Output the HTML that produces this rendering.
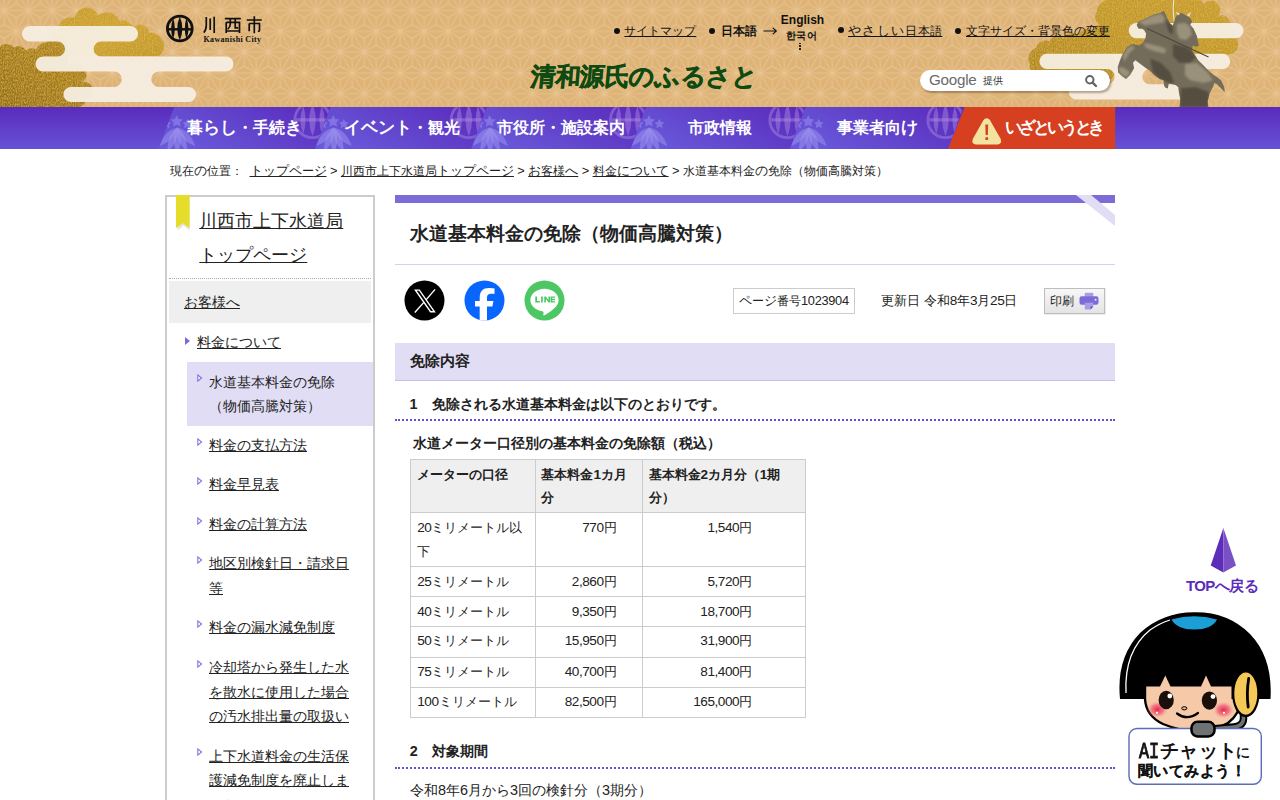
<!DOCTYPE html>
<html lang="ja">
<head>
<meta charset="utf-8">
<title>水道基本料金の免除（物価高騰対策）</title>
<style>
*{box-sizing:border-box;}
html,body{margin:0;padding:0;}
body{width:1280px;height:800px;overflow:hidden;background:#fff;font-family:"Liberation Sans",sans-serif;color:#222;position:relative;}
a{color:#222;text-decoration:underline;text-underline-offset:auto;}
i{font-style:normal;line-height:0;}
.s11{font-size:11px}.s12{font-size:12px}.s13{font-size:13px}.s14{font-size:14px}.s15{font-size:15px}.s16{font-size:16px}.s17{font-size:17px}.s18{font-size:18px}.s19{font-size:19px}
.abs{position:absolute;white-space:nowrap;}
/* header */
#hd{position:absolute;left:0;top:0;width:1280px;height:107px;background:#deb377;overflow:hidden;}
#hdsvg{position:absolute;left:0;top:0;}
.hl{position:absolute;font-size:12px;line-height:16px;white-space:nowrap;color:#111;}
.dot{position:absolute;width:6px;height:6px;border-radius:3px;background:#111;}
/* nav */
#nav{position:absolute;left:0;top:107px;width:1280px;height:42px;background:#5a2bbd;overflow:hidden;}
.nv{position:absolute;top:0;height:42px;line-height:42px;color:#fff;font-weight:bold;font-size:16.8px;white-space:nowrap;}
/* breadcrumb */
#bc{position:absolute;left:170px;top:162px;font-size:12.8px;line-height:18px;white-space:nowrap;color:#222;}
/* side */
#side{position:absolute;left:165px;top:195px;width:210px;height:620px;border:2px solid #ccc;background:#fff;}
.sl{position:absolute;left:44px;width:150px;font-size:14px;line-height:24.48px;color:#222;}
.tri{position:absolute;width:0;height:0;}
/* main */
#main{position:absolute;left:395px;top:195px;width:720px;height:605px;}
.cell{position:absolute;font-size:13.6px;line-height:23.12px;white-space:nowrap;color:#222;}
.num{text-align:right;}
</style>
</head>
<body>
<div id="hd">
<svg id="hdsvg" width="1280" height="107" viewBox="0 0 1280 107">
<defs>
<pattern id="asa" x="4.2" y="10.6" width="24" height="41.57" patternUnits="userSpaceOnUse">
<g stroke="#e8c594" stroke-width="1.1" stroke-opacity=".8" fill="none" stroke-linecap="round">
<path d="M0 0H24M-12 20.785H36M0 41.57H24"/>
<path d="M0 0L12 20.785L24 0M0 41.57L12 20.785L24 41.57"/>
<path d="M12 6.93L0 0M12 6.93L24 0M12 6.93V20.785"/>
<path d="M0 13.86V0M0 13.86L12 20.785M24 13.86V0M24 13.86L12 20.785"/>
<path d="M12 34.64V20.785M12 34.64L0 41.57M12 34.64L24 41.57"/>
<path d="M0 27.71V41.57M0 27.71L12 20.785M24 27.71V41.57M24 27.71L12 20.785"/>
</g>
</pattern>
<linearGradient id="gold" x1="0" y1="0" x2="1" y2="1">
<stop offset="0" stop-color="#c59a2e"/><stop offset=".5" stop-color="#cda233"/><stop offset="1" stop-color="#bf942a"/>
</linearGradient>
<linearGradient id="gold2" x1="1" y1="0" x2="0" y2="1">
<stop offset="0" stop-color="#b18624"/><stop offset=".6" stop-color="#a1761c"/><stop offset="1" stop-color="#916a18"/>
</linearGradient>
<linearGradient id="gold3" x1="0" y1="1" x2="1" y2="0">
<stop offset="0" stop-color="#ad8222"/><stop offset=".5" stop-color="#bf942a"/><stop offset="1" stop-color="#c89c30"/>
</linearGradient>
<filter id="gtex" x="0" y="0" width="100%" height="100%">
<feTurbulence type="fractalNoise" baseFrequency="0.9 0.5" numOctaves="2" seed="3" result="n"/>
<feColorMatrix in="n" type="matrix" values="0 0 0 0 0  0 0 0 0 0  0 0 0 0 0  .9 .9 0 0 -0.7" result="a"/>
<feFlood flood-color="#e2c055" result="c"/>
<feComposite in="c" in2="a" operator="in" result="sp"/>
<feComposite in="sp" in2="SourceGraphic" operator="in" result="sp2"/>
<feMerge><feMergeNode in="SourceGraphic"/><feMergeNode in="sp2"/></feMerge>
</filter>
<filter id="sbl" x="-10%" y="-10%" width="120%" height="120%"><feGaussianBlur stdDeviation="1.300"/></filter>
</defs>
<rect width="1280" height="107" fill="#deb377"/>
<rect width="1280" height="107" fill="url(#asa)"/>
<!-- left gold clouds -->
<g fill="url(#gold)" filter="url(#gtex)">
<path d="M52 56V34Q56 27 59 27Q60 20 66 18.500Q70 17 75 17.500A12 12 0 0 1 98 15.500A14 14 0 0 1 120 22A5 5 0 0 1 128 22.500L134.500 26.500A9 9 0 0 1 149 33A13 13 0 0 1 159 56z"/>
</g>
<g fill="url(#gold2)" filter="url(#gtex)">
<path d="M0 46.500a10 10 0 0 1 14 1a9 9 0 0 1 12 3a9 9 0 0 1 10-1a12 12 0 0 1 10-7a12 12 0 0 1 8-4l14 0V66a10 10 0 0 1 16 3a8 8 0 0 1-2 13a9 9 0 0 1 11 8a9 9 0 0 1-7 10a9 9 0 0 1-7 7H0z"/>
</g>
<!-- left white cloud -->
<g fill="#f5eee1" fill-opacity=".95">
<path d="M29.800 26H130.200a7.800 7.800 0 0 1 0 15.600H101a7.400 7.400 0 0 0 0 14.900H226a7.500 7.500 0 0 1 0 15H159a7.700 7.700 0 0 0 0 15.500H188.500a7.500 7.500 0 0 1 0 15H70.900a7.500 7.500 0 0 1 0-15H114a7.700 7.700 0 0 0 0-15.500H43a7.500 7.500 0 0 1 0-15H57.500a7.400 7.400 0 0 0 0-14.900H29.800a7.800 7.800 0 0 1 0-15.600z"/>
</g>
<!-- right gold cloud -->
<g fill="url(#gold3)" filter="url(#gtex)">
<path d="M1110 0A12 12 0 0 0 1097 12A8 8 0 0 0 1101 25A6 6 0 0 0 1094 33A9 9 0 0 0 1078 36A8 8 0 0 0 1064 38.500A8 8 0 0 0 1050 41.500A10 10 0 0 0 1036 48A11 11 0 0 0 1030 64A8 8 0 0 0 1036 74L1040 78H1106Q1114 82 1114 72V54H1225A10 10 0 0 0 1237 40A8 8 0 0 0 1229 29A9 9 0 0 0 1218 16A9 9 0 0 0 1204 4A8 8 0 0 0 1195 0z"/>
</g>
<!-- right white clouds -->
<g fill="#f5eee1" fill-opacity=".95">
<rect x="1128.700" y="23" width="114.700" height="15.200" rx="7.600"/>
<path d="M1047 53.800H1222.600a7.600 7.600 0 0 1 0 15.200H1150a7.650 7.650 0 0 0 0 15.300H1190a7.600 7.600 0 0 1 0 15.200H1076.400a7.600 7.600 0 0 1 0-15.200H1107a7.650 7.650 0 0 0 0-15.300H1047a7.600 7.600 0 0 1 0-15.200z"/>
</g>
<!-- statue -->
<g id="statue">
<clipPath id="stc"><path d="M1136.7 24.7 L1138.7 21.4 L1144.8 18.7 L1152.8 14.7 L1160.8 12.7 L1163.5 10.7 L1165.5 14.0 L1167.5 18.7 L1170.2 23.4 L1172.8 25.4 L1174.2 21.4 L1175.5 17.4 L1178.2 14.0 L1180.9 12.7 L1184.9 14.7 L1190.2 18.0 L1192.2 21.4 L1190.2 24.7 L1193.6 28.7 L1196.9 36.1 L1198.9 46.1 L1195.6 46.8 L1192.9 45.5 L1191.8 50.1 L1195.6 56.1 L1198.2 60.2 L1203.6 65.5 L1208.9 70.9 L1213.6 74.9 L1217.0 76.9 L1221.0 80.2 L1224.3 86.9 L1224.7 92.2 L1221.0 88.2 L1217.0 84.2 L1214.3 82.9 L1212.9 86.9 L1209.6 93.6 L1207.6 101.6 L1208.3 107.5 L1179.5 107.5 L1180.2 98.9 L1178.9 92.2 L1178.2 86.9 L1175.5 84.9 L1168.8 83.6 L1167.8 88.5 L1165.1 87.6 L1164.1 85.6 L1163.5 80.2 L1159.5 78.9 L1154.1 74.9 L1150.1 70.9 L1146.1 68.2 L1140.7 64.2 L1135.4 60.2 L1133.0 62.8 L1134.1 68.2 L1130.1 74.9 L1126.0 78.9 L1122.0 76.2 L1118.0 72.2 L1117.8 66.8 L1120.0 60.2 L1122.3 54.8 L1127.4 46.8 L1132.7 44.1 L1139.4 45.5 L1142.8 42.8 L1145.4 38.8 L1146.1 33.4 L1144.1 30.1 L1142.1 28.7 L1138.7 28.7 L1137.4 26.7z"/></clipPath>
<path fill="none" stroke="#efeadc" stroke-width="1" d="M1173.700 0Q1171.300 20 1179.500 38"/>
<path fill="#746c5a" d="M1136.7 24.7 L1138.7 21.4 L1144.8 18.7 L1152.8 14.7 L1160.8 12.7 L1163.5 10.7 L1165.5 14.0 L1167.5 18.7 L1170.2 23.4 L1172.8 25.4 L1174.2 21.4 L1175.5 17.4 L1178.2 14.0 L1180.9 12.7 L1184.9 14.7 L1190.2 18.0 L1192.2 21.4 L1190.2 24.7 L1193.6 28.7 L1196.9 36.1 L1198.9 46.1 L1195.6 46.8 L1192.9 45.5 L1191.8 50.1 L1195.6 56.1 L1198.2 60.2 L1203.6 65.5 L1208.9 70.9 L1213.6 74.9 L1217.0 76.9 L1221.0 80.2 L1224.3 86.9 L1224.7 92.2 L1221.0 88.2 L1217.0 84.2 L1214.3 82.9 L1212.9 86.9 L1209.6 93.6 L1207.6 101.6 L1208.3 107.5 L1179.5 107.5 L1180.2 98.9 L1178.9 92.2 L1178.2 86.9 L1175.5 84.9 L1168.8 83.6 L1167.8 88.5 L1165.1 87.6 L1164.1 85.6 L1163.5 80.2 L1159.5 78.9 L1154.1 74.9 L1150.1 70.9 L1146.1 68.2 L1140.7 64.2 L1135.4 60.2 L1133.0 62.8 L1134.1 68.2 L1130.1 74.9 L1126.0 78.9 L1122.0 76.2 L1118.0 72.2 L1117.8 66.8 L1120.0 60.2 L1122.3 54.8 L1127.4 46.8 L1132.7 44.1 L1139.4 45.5 L1142.8 42.8 L1145.4 38.8 L1146.1 33.4 L1144.1 30.1 L1142.1 28.7 L1138.7 28.7 L1137.4 26.7z"/>
<g clip-path="url(#stc)" filter="url(#sbl)"><path fill="#9a917a" d="M1138.7 22.1 L1152.8 15.4 L1160.8 13.4 L1164.8 17.4 L1163.5 22.7 L1154.1 24.1 L1144.8 25.4z M1143.4 42.8 L1150.1 44.1 L1160.8 46.8 L1166.1 49.5 L1164.8 53.5 L1155.5 51.5 L1146.1 48.1z M1176.8 24.1 L1184.9 22.7 L1190.2 26.7 L1191.6 34.8 L1186.2 40.1 L1179.5 38.8 L1176.8 32.1z M1184.9 64.2 L1196.9 62.8 L1207.6 72.2 L1212.9 80.2 L1203.6 82.9 L1190.2 80.2 L1184.9 74.9z M1122.7 56.1 L1127.4 48.1 L1132.7 45.5 L1134.7 48.1 L1128.7 53.5 L1124.7 61.5z M1119.4 66.8 L1124.7 68.2 L1130.1 72.2 L1126.7 77.5 L1122.0 74.9 L1118.7 70.9z"/>
<path fill="#544d40" d="M1150.1 58.8 L1160.8 62.8 L1170.2 72.2 L1174.2 82.9 L1168.8 82.9 L1159.5 78.2 L1152.8 72.2z M1172.8 44.1 L1184.9 46.8 L1191.6 50.8 L1195.6 57.5 L1190.2 62.8 L1179.5 62.8 L1172.8 56.1z M1180.9 88.2 L1195.6 86.9 L1208.9 92.2 L1207.6 107.0 L1180.2 107.0z M1166.1 20.1 L1170.2 24.1 L1172.8 26.7 L1172.8 34.8 L1168.8 32.1 L1166.8 25.4z"/></g>
<path fill="none" stroke="#4e473b" stroke-width="1.300" d="M1147 28.500L1208.500 57"/>
<path fill="#e4dece" d="M1186.500 15l4.500-3-1.500 4.500zM1178.500 15.500l-3-3.500 4.500 1.500z"/>
</g>
<!-- emblem -->
<g transform="translate(179.800 28.500)">
<circle r="12.400" fill="none" stroke="#111" stroke-width="2.800"/>
<path d="M-12.500 .8H12.500" stroke="#111" stroke-width="2.400"/>
<path d="M0-12Q-5 0 0 12Q5 0 0-12z" fill="#111"/>
<path d="M-6.600-10.500Q-10.800 0-6.600 10.500Q-3.400 0-6.600-10.500z" fill="#111"/>
<path d="M6.600-10.500Q10.800 0 6.600 10.500Q3.400 0 6.600-10.500z" fill="#111"/>
</g>
<!-- kawanishi-shi -->
<g fill="none" stroke="#111" stroke-width="1.700" stroke-linecap="butt">
<path d="M206.300 17V25.500Q206.100 30.300 203.800 32.600M210.200 18.400V30M214.200 16.800V33"/>
<path d="M224.800 18.600H240.800M230.300 18.600V24Q230.100 27.600 227.600 29.200M235.200 18.600V27.800H238.200M226.200 22.300H239.500V33M226.200 22.300V33M226.200 31H239.500"/>
<path d="M254.300 16.200V19.600M246.800 20H261.800M249.200 23.500H259.500V30.200Q259.500 31.500 257.800 31.500M249.200 23.500V31.200M254.300 20V33.200"/>
</g>
</svg>
<div class="abs" style="left:203.500px;top:34.500px;font-family:'Liberation Serif',serif;font-weight:bold;font-size:8px;line-height:10px;letter-spacing:.34px;color:#111;">Kawanishi City</div>
<span class="dot" style="left:614px;top:27.500px"></span>
<a class="hl" style="left:624.400px;top:23px">サイトマップ</a>
<span class="dot" style="left:708.700px;top:27.500px"></span>
<span class="hl" style="left:720.900px;top:23px;font-weight:bold">日本語</span>
<svg class="abs" style="left:763px;top:26px" width="15" height="10" viewBox="0 0 15 10"><path d="M.5 5H13.200M9.800 1.800L13.400 5L9.800 8.200" fill="none" stroke="#111" stroke-width="1.050"/></svg>
<span class="hl" style="left:780.800px;top:12px;font-weight:bold;font-size:12px;">English</span>
<span class="hl" style="left:785.900px;top:27.500px;font-weight:bold;font-size:10px;line-height:16px;letter-spacing:.4px">한국어</span>
<span class="hl" style="left:798.500px;top:41px;width:3px;height:9px;"><i style="position:absolute;left:.5px;top:1.600px;width:1.500px;height:1.500px;background:#222"></i><i style="position:absolute;left:.5px;top:4.300px;width:1.500px;height:1.500px;background:#222"></i><i style="position:absolute;left:.5px;top:7px;width:1.500px;height:1.500px;background:#222"></i></span>
<span class="dot" style="left:837.700px;top:27px"></span>
<a class="hl" style="left:848px;top:22.500px"><i class="s13" style="letter-spacing:1.300px">やさしい</i><i style="letter-spacing:.4px">日本語</i></a>
<span class="dot" style="left:955px;top:27.500px"></span>
<a class="hl" style="left:966px;top:23px">文字サイズ・背景色の変更</a>
<div class="abs" id="catch" style="left:531px;top:60px;font-weight:bold;font-size:25px;line-height:32px;color:#0f4a12;letter-spacing:-.45px;-webkit-text-stroke:.5px #0f4a12;transform:skewX(-5deg);">清和源氏のふるさと</div>
<div class="abs" style="left:920px;top:69.800px;width:189.500px;height:20.800px;border-radius:10.400px;background:#fff;box-shadow:1.500px 2px 2px rgba(80,55,20,.4);"></div>
<div class="abs" style="left:929px;top:70.500px;font-size:15.200px;line-height:18px;color:#6b6b6b;letter-spacing:-.25px;">Google</div>
<div class="abs" style="left:983px;top:73.800px;font-size:10px;line-height:14px;color:#333;">提供</div>
<svg class="abs" style="left:1084px;top:73.500px" width="14" height="14" viewBox="0 0 14 14"><circle cx="5.800" cy="5.800" r="3.700" fill="none" stroke="#646464" stroke-width="2"/><path d="M8.600 8.600L12 12" stroke="#646464" stroke-width="2.400" stroke-linecap="round"/></svg>
</div>
<div id="nav">
<svg class="abs" style="left:0;top:0" width="1280" height="42" viewBox="0 107 1280 42">
<defs><linearGradient id="nbg" x1="0" y1="0" x2="0" y2="1"><stop offset="0" stop-color="#5a2bbd"/><stop offset="1" stop-color="#6652d4"/></linearGradient>
<linearGradient id="nit" x1="0" y1=".75" x2="1" y2=".25"><stop offset="0" stop-color="#6a5adb"/><stop offset=".4" stop-color="#6349cf"/><stop offset="1" stop-color="#5b2cbe"/></linearGradient>
<g id="leaf" fill="#a398f0" fill-opacity=".48">
<path transform="rotate(-44)" d="M0 0Q7 11 0 26Q-7 11 0 0z"/>
<path transform="rotate(-22)" d="M0 0Q7 11 0 26Q-7 11 0 0z"/>
<path transform="rotate(0)" d="M0 0Q7 11 0 26Q-7 11 0 0z"/>
<path transform="rotate(22)" d="M0 0Q7 11 0 26Q-7 11 0 0z"/>
<path transform="rotate(44)" d="M0 0Q7 11 0 26Q-7 11 0 0z"/>
<path d="M-0.5 -12.5L1.4 -8.6L5.7 -8.0L2.6 -5.0L3.3 -0.7L-0.5 -2.8L-4.3 -0.7L-3.6 -5.0L-6.7 -8.0L-2.4 -8.6z"/>
<path d="M10.0 -8.8L11.6 -5.6L15.0 -5.1L12.5 -2.7L13.1 0.8L10.0 -0.9L6.9 0.8L7.5 -2.7L5.0 -5.1L8.4 -5.6z"/>
<path d="M-11.0 -8.8L-9.4 -5.6L-6.0 -5.1L-8.5 -2.7L-7.9 0.8L-11.0 -0.9L-14.1 0.8L-13.5 -2.7L-16.0 -5.1L-12.6 -5.6z"/>
</g>
<g id="ring" fill="#b08fe0" fill-opacity=".45" stroke="none"><path d="M0-19.100A19.100 19.100 0 1 0 0 19.100A19.100 19.100 0 1 0 0-19.100zM0-16.300A16.300 16.300 0 1 1 0 16.300A16.300 16.300 0 1 1 0-16.300z" fill-rule="evenodd"/><path d="M-16.300-1.800H16.300V1.400H-16.300z"/><path d="M0-16.300Q-6.600 0 0 16.300Q6.600 0 0-16.300z"/><path d="M-9.200-14Q-15 0-9.200 14Q-4.600 0-9.200-14z"/><path d="M9.200-14Q15 0 9.200 14Q4.600 0 9.200-14z"/></g>
</defs>
<rect x="0" y="107" width="1280" height="42" fill="url(#nbg)"/>
<path d="M158.6 149L174.2 107H330.6L315.0 149z" fill="url(#nit)"/>
<clipPath id="cp0"><path d="M158.6 149L174.2 107H330.6L315.0 149z"/></clipPath>
<g clip-path="url(#cp0)"><use href="#ring" x="312.5" y="120"/><use href="#leaf" x="177.3" y="127.500"/></g>
<path d="M315.0 149L330.6 107H486.9L471.3 149z" fill="url(#nit)"/>
<clipPath id="cp1"><path d="M315.0 149L330.6 107H486.9L471.3 149z"/></clipPath>
<g clip-path="url(#cp1)"><use href="#ring" x="468.8" y="120"/><use href="#leaf" x="333.8" y="127.500"/></g>
<path d="M471.3 149L486.9 107H646.2L630.6 149z" fill="url(#nit)"/>
<clipPath id="cp2"><path d="M471.3 149L486.9 107H646.2L630.6 149z"/></clipPath>
<g clip-path="url(#cp2)"><use href="#ring" x="628.1" y="120"/><use href="#leaf" x="490.1" y="127.500"/></g>
<path d="M630.6 149L646.2 107H805.6L790.0 149z" fill="url(#nit)"/>
<clipPath id="cp3"><path d="M630.6 149L646.2 107H805.6L790.0 149z"/></clipPath>
<g clip-path="url(#cp3)"><use href="#ring" x="787.5" y="120"/><use href="#leaf" x="649.4" y="127.500"/></g>
<path d="M790.0 149L805.6 107H963.6L948.0 149z" fill="url(#nit)"/>
<clipPath id="cp4"><path d="M790.0 149L805.6 107H963.6L948.0 149z"/></clipPath>
<g clip-path="url(#cp4)"><use href="#ring" x="945.5" y="120"/><use href="#leaf" x="808.8" y="127.500"/></g>
<path d="M948 149L964.700 107H1115.200V149z" fill="#d63f1f"/>
<path d="M986.700 118.300Q984.500 118.300 983.400 120.200L972.900 138.800Q971 143.900 975.700 144.400H997.800Q1002.500 143.900 1000.600 138.800L990 120.200Q988.900 118.300 986.700 118.300z" fill="#f2e4a0"/>
<path d="M985.300 124.500h2.900l-.35 10.500h-2.200z M985.400 137.200h2.700v2.700h-2.700z" fill="#d63f1f"/>
</svg>
<span class="nv" style="left:186.5px"><i class="s16">暮</i><i class="s17">らし</i><i class="s16">・手続</i><i class="s17">き</i></span>
<span class="nv" style="left:343.5px"><i class="s17">イベント</i><i class="s16">・観光</i></span>
<span class="nv" style="left:497.1px"><i class="s16">市役所・施設案内</i></span>
<span class="nv" style="left:688.3px"><i class="s16">市政情報</i></span>
<span class="nv" style="left:836.8px"><i class="s16">事業者向</i><i class="s17">け</i></span>
<span class="nv" style="left:1005px;letter-spacing:-3.100px"><i class="s17">いざというとき</i></span>
</div>
<div id="bc" style="word-spacing:-.12px"><i class="s12">現在</i><i class="s13">の</i><i class="s12">位置：</i> <a style="margin-left:3.100px"><i class="s13">トップペ</i><i class="s12">ー</i><i class="s13">ジ</i></a> &gt; <a><i class="s12">川西市上下水道局</i><i class="s13">トップペ</i><i class="s12">ー</i><i class="s13">ジ</i></a> &gt; <a><i class="s13">お</i><i class="s12">客様</i><i class="s13">へ</i></a> &gt; <a><i class="s12">料金</i><i class="s13">について</i></a> &gt; <i class="s12">水道基本料金</i><i class="s13">の</i><i class="s12">免除（物価高騰対策）</i></div>
<div id="side">
<svg class="abs" style="left:8px;top:-2px" width="18" height="38" viewBox="0 0 18 38"><path d="M2.500 1.500V35.500L8.500 30.500L14.500 35.500V1.500z" fill="#b9b08a" fill-opacity=".35"/><path d="M1 0H14.600V33L7.800 28L1 33z" fill="#e6dc2a"/></svg>
<div class="abs" style="left:32.300px;top:8.200px;font-size:18px;line-height:33.600px;white-space:normal;width:170px"><a>川西市上下水道局<br>トップページ</a></div>
<div class="abs" style="left:2px;top:80.700px;width:202px;height:0;border-top:1px dotted #aaa"></div>
<div class="abs" style="left:2px;top:84px;width:202px;height:41.600px;background:#efefef"></div>
<div class="sl" style="left:17px;top:93.4px;"><a>お客様へ</a></div>
<div class="tri" style="left:18px;top:139.500px;border-left:5px solid #7b6cd8;border-top:4px solid transparent;border-bottom:4px solid transparent"></div>
<div class="sl" style="left:30px;top:132.700px;"><a>料金について</a></div>
<div class="abs" style="left:20px;top:165px;width:186px;height:63.600px;background:#e1ddf5"></div>
<svg class="abs" style="left:29.500px;top:177.3px" width="6" height="8" viewBox="0 0 6 8"><path d="M.8 .9L4.600 4L.8 7.100z" fill="#fff" fill-opacity=".6" stroke="#7d6fe0" stroke-width="1.050"/></svg>
<div class="sl" style="left:42px;top:172.8px;">水道基本料金の免除<br>（物価高騰対策）</div>
<svg class="abs" style="left:29.500px;top:240.9px" width="6" height="8" viewBox="0 0 6 8"><path d="M.8 .9L4.600 4L.8 7.100z" fill="#fff" fill-opacity=".6" stroke="#7d6fe0" stroke-width="1.050"/></svg>
<div class="sl" style="left:42px;top:236.4px;"><a>料金の支払方法</a></div>
<svg class="abs" style="left:29.500px;top:279.9px" width="6" height="8" viewBox="0 0 6 8"><path d="M.8 .9L4.600 4L.8 7.100z" fill="#fff" fill-opacity=".6" stroke="#7d6fe0" stroke-width="1.050"/></svg>
<div class="sl" style="left:42px;top:275.4px;"><a>料金早見表</a></div>
<svg class="abs" style="left:29.500px;top:319.5px" width="6" height="8" viewBox="0 0 6 8"><path d="M.8 .9L4.600 4L.8 7.100z" fill="#fff" fill-opacity=".6" stroke="#7d6fe0" stroke-width="1.050"/></svg>
<div class="sl" style="left:42px;top:315px;"><a>料金の計算方法</a></div>
<svg class="abs" style="left:29.500px;top:358.9px" width="6" height="8" viewBox="0 0 6 8"><path d="M.8 .9L4.600 4L.8 7.100z" fill="#fff" fill-opacity=".6" stroke="#7d6fe0" stroke-width="1.050"/></svg>
<div class="sl" style="left:42px;top:354.4px;"><a>地区別検針日・請求日<br>等</a></div>
<svg class="abs" style="left:29.500px;top:422.8px" width="6" height="8" viewBox="0 0 6 8"><path d="M.8 .9L4.600 4L.8 7.100z" fill="#fff" fill-opacity=".6" stroke="#7d6fe0" stroke-width="1.050"/></svg>
<div class="sl" style="left:42px;top:418.3px;"><a>料金の漏水減免制度</a></div>
<svg class="abs" style="left:29.500px;top:462.8px" width="6" height="8" viewBox="0 0 6 8"><path d="M.8 .9L4.600 4L.8 7.100z" fill="#fff" fill-opacity=".6" stroke="#7d6fe0" stroke-width="1.050"/></svg>
<div class="sl" style="left:42px;top:458.3px;"><a>冷却塔から発生した水<br>を散水に使用した場合<br>の汚水排出量の取扱い</a></div>
<svg class="abs" style="left:29.500px;top:551.2px" width="6" height="8" viewBox="0 0 6 8"><path d="M.8 .9L4.600 4L.8 7.100z" fill="#fff" fill-opacity=".6" stroke="#7d6fe0" stroke-width="1.050"/></svg>
<div class="sl" style="left:42px;top:546.7px;"><a>上下水道料金の生活保<br>護減免制度を廃止しま<br>した</a></div>
</div>
<div id="main">
<div class="abs" style="left:0;top:0;width:720px;height:8px;background:#7b6cd8"></div>
<svg class="abs" style="left:676px;top:0" width="44" height="34" viewBox="676 0 44 34"><path d="M681 0H696L720 20V31z" fill="#e1ddf5"/></svg>
<div class="abs" style="left:15px;top:25px;font-size:19.200px;font-weight:bold;line-height:28px;color:#222;"><i class="s19">水道基本料金の免除（物価高騰対策）</i></div>
<div class="abs" style="left:0px;top:69px;width:720px;height:1px;background:#d5d0f0;"></div>
<svg class="abs" style="left:9.400px;top:84.900px" width="161" height="41" viewBox="404.500 279.500 161 41">
<circle cx="425" cy="300" r="20" fill="#000"/>
<path d="M414.600 288.900H420.200L436.300 312H430.700z M417.300 290.300L431.400 310.600H433.600L419.500 290.300z" fill="#fff" fill-rule="evenodd"/>
<path d="M435.600 288.900L426.500 299.400M424.300 301.900L415.300 312" stroke="#fff" stroke-width="1.400" fill="none"/>
<circle cx="485" cy="300" r="20" fill="#0866ff"/>
<path d="M480.200 320V306H475.500V300.500H480.200V297.300C480.200 290.700 483.400 287.500 489.700 287.500C491.300 287.500 493.600 287.750 495 288.100V293.400C494.300 293.300 493.300 293.250 492.300 293.250C488.900 293.250 487.500 294.500 487.500 297.600V300.500H493.900L492.900 306H487.500V320z" fill="#fff"/>
<circle cx="545" cy="300" r="20" fill="#4cc764"/>
<path d="M545 288.300c-7.800 0-14.100 5-14.100 11.300c0 5.600 5 10.300 11.800 11.200c.45.100 1.100.3 1.250.7c.15.35.1.9.05 1.300l-.2 1.150c-.05.350-.3 1.400 1.250.750c1.500-.6 8.100-4.700 11.050-8.100c2.050-2.200 3-4.500 3-7c0-6.300-6.300-11.300-14.100-11.300z" fill="#fff"/>
<g fill="#4cc764"><path d="M535.800 295.900h1.700v4.700h2.900v1.500h-4.600z"/><path d="M541.600 295.900h1.700v6.200h-1.700z"/><path d="M544.800 295.900h1.600l2.600 3.600v-3.600h1.650v6.200h-1.550l-2.650-3.650v3.650h-1.650z"/><path d="M552 295.900h4.500v1.450h-2.850v.95h2.700v1.400h-2.700v.95h2.850v1.450h-4.500z" transform="translate(-.9 0)"/></g>
</svg>
<div class="abs" style="left:338px;top:93px;width:122px;height:26px;border:1px solid #ccc;background:#fff;"></div>
<div class="abs" style="left:344px;top:97px;font-size:12.800px;line-height:18px;"><i class="s13">ペ</i><i class="s12">ー</i><i class="s13">ジ</i><i class="s12">番号</i><i style="letter-spacing:-0.30px">1023904</i></div>
<div class="abs" style="left:486px;top:97px;font-size:13.600px;line-height:18px;"><i class="s13">更新日</i> <i class="s13">令和</i><i style="letter-spacing:-0.45px">8</i><i class="s13">年</i><i style="letter-spacing:-0.45px">3</i><i class="s13">月</i><i style="letter-spacing:-0.45px">25</i><i class="s13">日</i></div>
<div class="abs" style="left:649px;top:93px;width:61px;height:26px;border:1px solid #bdbdbd;background:linear-gradient(#f7f7f7,#e4e4e4);box-shadow:.5px .5px 0 #d8d8d8;"></div>
<div class="abs" style="left:655px;top:97px;font-size:12px;line-height:18px;">印刷</div>
<svg class="abs" style="left:683.900px;top:97px" width="21" height="18" viewBox="1079.500 292 21 18"><rect x="1085.300" y="292.800" width="8.450" height="4" fill="#a99de8"/><rect x="1080" y="296.200" width="19" height="8.600" rx="2.200" fill="#7b6cd8"/><path d="M1085.300 302.800h8.450v3.800l-2.700 2.800h-5.750z" fill="#a99de8"/><path d="M1093.750 306.600h-2.700v2.800z" fill="#5a4cc0"/><rect x="1095.300" y="298.900" width="1.600" height="1.600" fill="#fff"/></svg>
<div class="abs" style="left:0px;top:148px;width:720px;height:38px;background:#e1ddf5;border-bottom:1px solid #c4bdec;"></div>
<div class="abs" style="left:14.500px;top:154.300px;font-size:15px;font-weight:bold;line-height:24px;">免除内容</div>
<div class="abs" style="left:14.600px;top:197.100px;font-size:14.400px;font-weight:bold;line-height:24px;">1<i class="s14">　免除される水道基本料金は以下のとおりです。</i></div>
<div class="abs" style="left:0px;top:224px;width:720px;height:0;border-top:2px dotted #6152d8;"></div>
<div class="abs" style="left:18.3px;top:236px;font-size:14.400px;font-weight:bold;line-height:24px;"><i class="s14">水道メーター口径別の基本料金の免除額（税込）</i></div>
<div class="abs" style="left:15px;top:264px;width:395.500px;height:259px;border:1px solid #ccc;background:#fff"></div>
<div class="abs" style="left:16px;top:265px;width:393.500px;height:52px;background:#efefef"></div>
<div class="abs" style="left:15px;top:317px;width:395.500px;height:1px;background:#ccc;"></div>
<div class="abs" style="left:15px;top:371px;width:395.500px;height:1px;background:#ccc;"></div>
<div class="abs" style="left:15px;top:401px;width:395.500px;height:1px;background:#ccc;"></div>
<div class="abs" style="left:15px;top:431px;width:395.500px;height:1px;background:#ccc;"></div>
<div class="abs" style="left:15px;top:462px;width:395.500px;height:1px;background:#ccc;"></div>
<div class="abs" style="left:15px;top:492px;width:395.500px;height:1px;background:#ccc;"></div>
<div class="abs" style="left:140px;top:264px;width:1px;height:259px;background:#ccc;"></div>
<div class="abs" style="left:247px;top:264px;width:1px;height:259px;background:#ccc;"></div>
<div class="cell" style="left:22.2px;top:267.84px;font-weight:bold;"><i class="s13">メーターの口径</i></div>
<div class="cell" style="left:146.45px;top:267.84px;font-weight:bold;"><i class="s13">基本料金</i><i style="letter-spacing:-0.45px">1</i><i class="s13">カ月</i><br><i class="s13">分</i></div>
<div class="cell" style="left:253.5px;top:267.84px;font-weight:bold;"><i class="s13">基本料金</i><i style="letter-spacing:-0.45px">2</i><i class="s13">カ月分（</i><i style="letter-spacing:-0.45px">1</i><i class="s13">期</i><br><i class="s13">分）</i></div>
<div class="cell" style="left:22.2px;top:321.39px;"><i style="letter-spacing:-0.45px">20</i><i class="s13">ミリメートル以</i><br><i class="s13">下</i></div>
<div class="cell num" style="left:145.7px;top:321.39px;width:75.900px;"><i style="letter-spacing:-0.45px">770</i><i class="s13">円</i></div>
<div class="cell num" style="left:252.7px;top:321.39px;width:104.500px;"><i style="letter-spacing:-0.45px">1,540</i><i class="s13">円</i></div>
<div class="cell" style="left:22.2px;top:374.64px;"><i style="letter-spacing:-0.45px">25</i><i class="s13">ミリメートル</i></div>
<div class="cell num" style="left:145.7px;top:374.64px;width:75.900px;"><i style="letter-spacing:-0.45px">2,860</i><i class="s13">円</i></div>
<div class="cell num" style="left:252.7px;top:374.64px;width:104.500px;"><i style="letter-spacing:-0.45px">5,720</i><i class="s13">円</i></div>
<div class="cell" style="left:22.2px;top:404.64px;"><i style="letter-spacing:-0.45px">40</i><i class="s13">ミリメートル</i></div>
<div class="cell num" style="left:145.7px;top:404.64px;width:75.900px;"><i style="letter-spacing:-0.45px">9,350</i><i class="s13">円</i></div>
<div class="cell num" style="left:252.7px;top:404.64px;width:104.500px;"><i style="letter-spacing:-0.45px">18,700</i><i class="s13">円</i></div>
<div class="cell" style="left:22.2px;top:434.44px;"><i style="letter-spacing:-0.45px">50</i><i class="s13">ミリメートル</i></div>
<div class="cell num" style="left:145.7px;top:434.44px;width:75.900px;"><i style="letter-spacing:-0.45px">15,950</i><i class="s13">円</i></div>
<div class="cell num" style="left:252.7px;top:434.44px;width:104.500px;"><i style="letter-spacing:-0.45px">31,900</i><i class="s13">円</i></div>
<div class="cell" style="left:22.2px;top:464.94px;"><i style="letter-spacing:-0.45px">75</i><i class="s13">ミリメートル</i></div>
<div class="cell num" style="left:145.7px;top:464.94px;width:75.900px;"><i style="letter-spacing:-0.45px">40,700</i><i class="s13">円</i></div>
<div class="cell num" style="left:252.7px;top:464.94px;width:104.500px;"><i style="letter-spacing:-0.45px">81,400</i><i class="s13">円</i></div>
<div class="cell" style="left:22.2px;top:495.04px;"><i style="letter-spacing:-0.45px">100</i><i class="s13">ミリメートル</i></div>
<div class="cell num" style="left:145.7px;top:495.04px;width:75.900px;"><i style="letter-spacing:-0.45px">82,500</i><i class="s13">円</i></div>
<div class="cell num" style="left:252.7px;top:495.04px;width:104.500px;"><i style="letter-spacing:-0.45px">165,000</i><i class="s13">円</i></div>
<div class="abs" style="left:14.700px;top:543.700px;font-size:14.400px;font-weight:bold;line-height:24px;">2<i class="s14">　対象期間</i></div>
<div class="abs" style="left:0px;top:572px;width:720px;height:0;border-top:2px dotted #6152d8;"></div>
<div class="abs" style="left:15px;top:583.100px;font-size:14.400px;line-height:24px;"><i class="s14">令和</i>8<i class="s14">年</i>6<i class="s14">月から</i>3<i class="s14">回の検針分（</i>3<i class="s14">期分）</i></div>
</div>
<svg class="abs" style="left:1205px;top:524px" width="40" height="52" viewBox="1205 524 40 52"><path d="M1223.400 527.900L1210.700 565.600L1223.300 572.600z" fill="#5b2db8"/><path d="M1223.400 527.900L1236 565.600L1223.300 572.600z" fill="#7a50c4"/></svg>
<div class="abs" style="left:1186px;top:577px;font-size:15px;font-weight:bold;line-height:18px;color:#5b2db8;letter-spacing:-.6px;">TOPへ戻る</div>
<svg class="abs" style="left:1110px;top:605px" width="170" height="190" viewBox="1110 605 170 190">
<!-- face -->
<defs><radialGradient id="chk"><stop offset="0" stop-color="#e8204a" stop-opacity=".95"/><stop offset=".55" stop-color="#ee4468" stop-opacity=".6"/><stop offset="1" stop-color="#f6a0a0" stop-opacity="0"/></radialGradient></defs>
<path d="M1145 672V699Q1146 716 1163 724Q1180 731 1195 730.500Q1215 730.500 1228 723Q1240 714 1241 699L1238 672z" fill="#f6c9a8" stroke="#000" stroke-width="2.400"/>
<!-- cheeks -->
<ellipse cx="1157.500" cy="709.500" rx="10.500" ry="8.500" fill="url(#chk)"/>
<ellipse cx="1223.500" cy="710" rx="10.500" ry="8.500" fill="url(#chk)"/>
<circle cx="1157" cy="712.800" r="1.100" fill="#fff"/><circle cx="1224" cy="712.800" r="1.100" fill="#fff"/>
<!-- hair -->
<path d="M1120 699Q1116 658 1140 633Q1163 612 1195 612.300Q1228 612 1250 634Q1273 658 1270.500 699H1231.500V686.500H1211L1206 675.500L1201 686.500H1170.500L1165.300 675.500L1160 686.500H1145V699z" fill="#000"/>
<path d="M1126 693Q1124 651 1150 630Q1160 623 1170 620" fill="none" stroke="#fff" stroke-width="1.300"/>
<!-- blue top -->
<path d="M1171.500 619.500Q1194 613 1217 619.500Q1212 629.500 1194 629.500Q1177 629.500 1171.500 619.500z" fill="#1c9fd6"/>
<!-- eyes -->
<ellipse cx="1166.200" cy="700" rx="7.600" ry="9.200" fill="#1a0f0a"/><ellipse cx="1209.400" cy="700.600" rx="7.600" ry="9.200" fill="#1a0f0a"/>
<circle cx="1169.800" cy="696" r="2.400" fill="#fff"/><circle cx="1213" cy="696.600" r="2.400" fill="#fff"/>
<ellipse cx="1184.300" cy="708.300" rx="2.600" ry="1.600" fill="#e9b090" stroke="#000" stroke-width="1"/>
<path d="M1177 713.500Q1187 721 1198 713" fill="none" stroke="#000" stroke-width="2.200" stroke-linecap="round"/>
<!-- headset -->
<path d="M1243.500 712V719Q1243 726 1234 727L1212 729" fill="none" stroke="#000" stroke-width="7.500" stroke-linecap="round"/>
<path d="M1243.500 712V719Q1243 726 1234 727L1212 729" fill="none" stroke="#6f7272" stroke-width="3.600" stroke-linecap="round"/>
<ellipse cx="1245.800" cy="693.600" rx="12.600" ry="22.300" fill="#f5c857" stroke="#000" stroke-width="2.200"/>
<path d="M1248.700 678.500Q1246.300 693 1248.200 707" fill="none" stroke="#000" stroke-width="2.800" stroke-linecap="round"/>
<!-- bubble -->
<rect x="1129" y="728.500" width="132.300" height="55.800" rx="8" fill="#fff" stroke="#5b6cb8" stroke-width="1.400"/>
<rect x="1191.500" y="721.800" width="23" height="14.600" rx="6" fill="#6f7272" stroke="#000" stroke-width="2.500"/>
</svg>
<div class="abs" style="left:1138.500px;top:739.300px;font-family:'Liberation Mono',monospace;font-size:21.500px;line-height:26px;color:#111;-webkit-text-stroke:.9px #111;transform:scaleX(.78);transform-origin:0 50%;">AI</div>
<div class="abs" style="left:1159.500px;top:738.500px;font-size:19px;font-weight:bold;line-height:24px;color:#111;letter-spacing:.6px;">チャット</div>
<div class="abs" style="left:1235.500px;top:741px;font-size:14px;font-weight:bold;line-height:22px;color:#111;">に</div>
<div class="abs" style="left:1137.500px;top:760px;font-size:15px;font-weight:bold;line-height:22px;color:#111;letter-spacing:.5px;-webkit-text-stroke:.15px #111">聞いてみよう！</div>
</body>
</html>
